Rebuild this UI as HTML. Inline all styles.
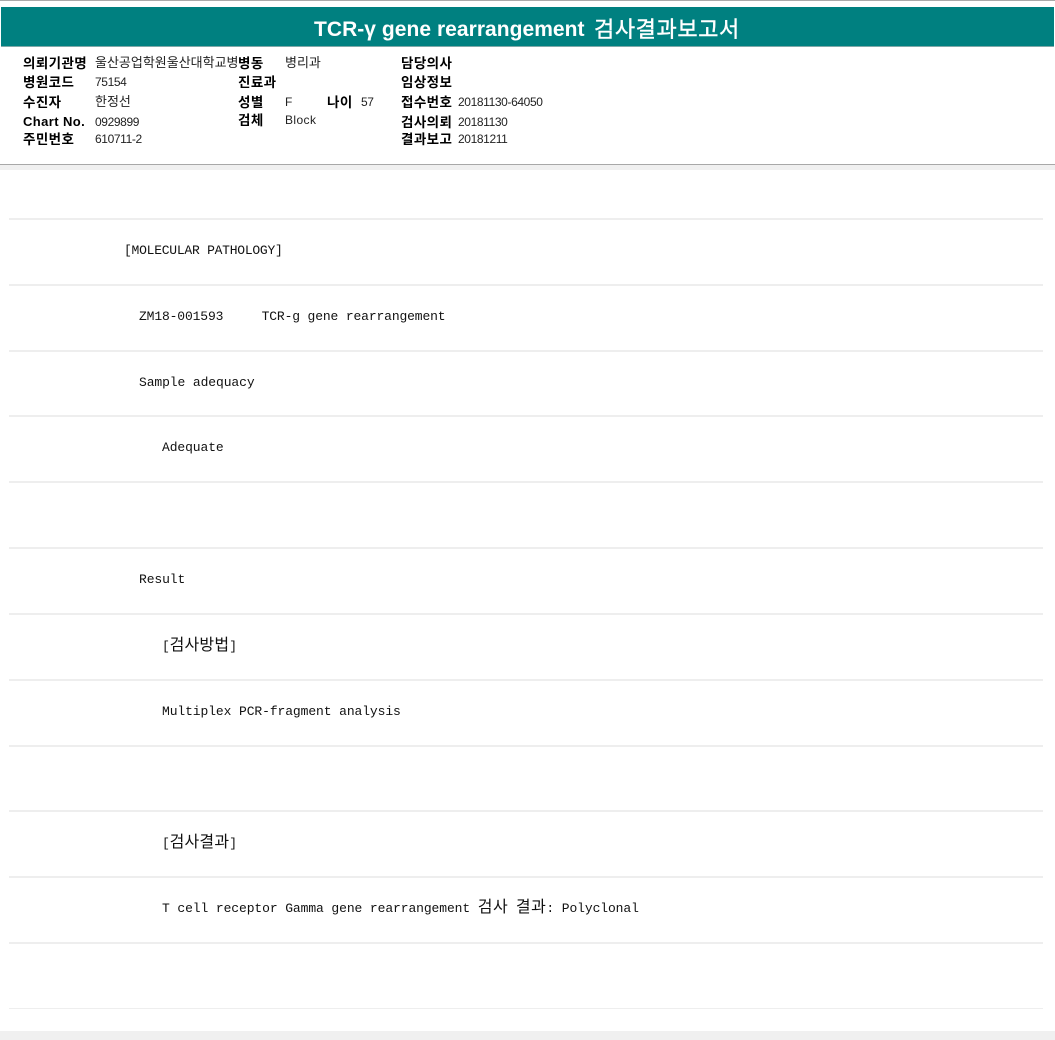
<!DOCTYPE html>
<html lang="ko"><head><meta charset="utf-8"><title>TCR-γ gene rearrangement 검사결과보고서</title>
<style>
html,body{margin:0;padding:0;background:#fff}
#p{position:relative;width:1055px;height:1040px;overflow:hidden;background:#fff;font-family:"Liberation Sans","Noto Sans CJK KR",sans-serif;color:#000}
#p div{position:absolute;white-space:pre}
.b{background:#eee;left:9px;width:1034px;height:2px}
.l{font-size:13.5px;font-weight:700;line-height:16px;letter-spacing:.4px;margin-top:1px}
.v{font-size:12px;line-height:16px;color:#222}
.k{font-size:13px;letter-spacing:0}
.n{letter-spacing:-.38px}
.m{font-family:"Liberation Mono","Noto Sans CJK KR",monospace;font-size:13px;line-height:18px;letter-spacing:-.25px;color:#111}
.m span{font-size:16px;line-height:18px;letter-spacing:.2px}
.m span.w{letter-spacing:.5px}
</style></head><body><div id="p">
<div style="left:0;top:0;width:1055px;height:1px;background:#aaa"></div>
<div style="left:1px;top:7px;width:1053px;height:39px;background:#008080;border-bottom:1px solid #7fa8a8"></div>
<div style="left:314px;top:12px;color:#fff;font-size:21px;font-weight:700;line-height:36px;letter-spacing:.04px">TCR-γ gene rearrangement</div>
<div style="left:594px;top:12px;color:#fff;font-size:22px;font-weight:400;line-height:36px;letter-spacing:.6px;-webkit-text-stroke:.4px #fff">검사결과보고서</div>

<div class="l" style="left:23px;top:55px">의뢰기관명</div>
<div class="v k" style="left:95px;top:55px">울산공업학원울산대학교병</div>
<div class="l" style="left:238px;top:55px">병동</div>
<div class="v k" style="left:285px;top:55px">병리과</div>
<div class="l" style="left:401px;top:55px">담당의사</div>

<div class="l" style="left:23px;top:74px">병원코드</div>
<div class="v n" style="left:95px;top:74px">75154</div>
<div class="l" style="left:238px;top:74px">진료과</div>
<div class="l" style="left:401px;top:74px">임상정보</div>

<div class="l" style="left:23px;top:94px">수진자</div>
<div class="v k" style="left:95px;top:94px">한정선</div>
<div class="l" style="left:238px;top:94px">성별</div>
<div class="v" style="left:285px;top:94px">F</div>
<div class="l" style="left:327px;top:94px">나이</div>
<div class="v n" style="left:361px;top:94px">57</div>
<div class="l" style="left:401px;top:94px">접수번호</div>
<div class="v n" style="left:458px;top:94px">20181130-64050</div>

<div class="l" style="left:23px;top:113px;font-size:13px;letter-spacing:.4px">Chart No.</div>
<div class="v n" style="left:95px;top:114px">0929899</div>
<div class="l" style="left:238px;top:112px">검체</div>
<div class="v" style="left:285px;top:112px;letter-spacing:.4px">Block</div>
<div class="l" style="left:401px;top:114px">검사의뢰</div>
<div class="v n" style="left:458px;top:114px">20181130</div>

<div class="l" style="left:23px;top:131px">주민번호</div>
<div class="v n" style="left:95px;top:131px">610711-2</div>
<div class="l" style="left:401px;top:131px">결과보고</div>
<div class="v n" style="left:458px;top:131px">20181211</div>

<div style="left:0;top:164px;width:1055px;height:1px;background:#a8a8a8"></div>
<div style="left:0;top:165px;width:1055px;height:5px;background:#f0f0f0"></div>

<div class="b" style="top:218px"></div>
<div class="b" style="top:284px"></div>
<div class="b" style="top:350px"></div>
<div class="b" style="top:415px"></div>
<div class="b" style="top:481px"></div>
<div class="b" style="top:547px"></div>
<div class="b" style="top:613px"></div>
<div class="b" style="top:679px"></div>
<div class="b" style="top:745px"></div>
<div class="b" style="top:810px"></div>
<div class="b" style="top:876px"></div>
<div class="b" style="top:942px"></div>
<div class="b" style="top:1008px;height:1px"></div>

<div class="m" style="left:124px;top:242px">[MOLECULAR PATHOLOGY]</div>
<div class="m" style="left:139px;top:308px;letter-spacing:-.14px">ZM18-001593     TCR-g gene rearrangement</div>
<div class="m" style="left:139px;top:374px;letter-spacing:-.1px">Sample adequacy</div>
<div class="m" style="left:162px;top:439px;letter-spacing:-.1px">Adequate</div>
<div class="m" style="left:139px;top:571px;letter-spacing:-.1px">Result</div>
<div class="m" style="left:162px;top:637px">[<span>검사방법</span>]</div>
<div class="m" style="left:162px;top:703px;letter-spacing:-.1px">Multiplex PCR-fragment analysis</div>
<div class="m" style="left:162px;top:834px">[<span>검사결과</span>]</div>
<div class="m" style="left:162px;top:899px;letter-spacing:-.1px">T cell receptor Gamma gene rearrangement <span class="w">검사</span> <span class="w">결과</span>: Polyclonal</div>

<div style="left:0;top:1031px;width:1055px;height:9px;background:#f0f0f0"></div>
</div></body></html>
